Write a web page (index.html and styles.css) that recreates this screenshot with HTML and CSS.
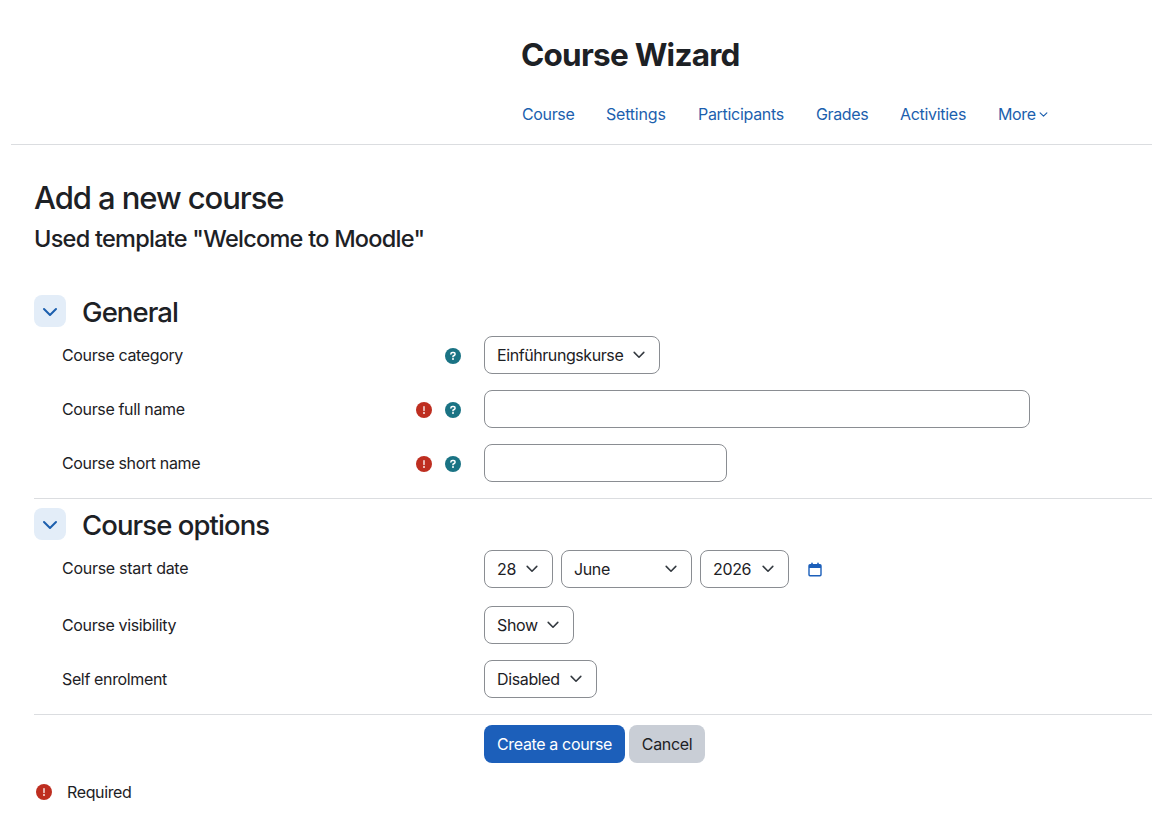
FILE: index.html
```
<!DOCTYPE html>
<html lang="en">
<head>
  <meta charset="UTF-8">
  <meta name="viewport" content="width=device-width, initial-scale=1.0">
  <title>Course Wizard</title>
  <link rel="stylesheet" href="styles.css">
</head>
<body>
  <!-- Shared icons -->
  <svg class="sprite" width="0" height="0">
    <symbol id="chevron" viewBox="0 0 16 16">
      <path d="M2 5l6 6 6-6" fill="none" stroke="currentColor" stroke-width="2" stroke-linecap="round" stroke-linejoin="round"/>
    </symbol>
    <symbol id="required" viewBox="0 0 16 16">
      <circle cx="8" cy="8" r="8" fill="#be2e20"/>
      <path d="M8 4.7v3.8" stroke="#fff" stroke-width="1.3" stroke-linecap="round"/>
      <circle cx="8" cy="11" r=".9" fill="#fff"/>
    </symbol>
    <symbol id="help" viewBox="0 0 16 16">
      <circle cx="8" cy="8" r="8" fill="#1a7384"/>
      <path d="M5.9 6.1c0-1 .7-1.5 1.6-1.5h1c.9 0 1.6.6 1.6 1.5 0 .7-.4 1.1-.9 1.4L8 8.2v.6" fill="none" stroke="#fff" stroke-width="1.5" stroke-linecap="round" stroke-linejoin="round"/>
      <circle cx="8" cy="11.1" r="1" fill="#fff"/>
    </symbol>
  </svg>

  <header class="page-header">
    <h1>Course Wizard</h1>
    <nav class="tabs">
      <a class="tab-course" href="#">Course</a>
      <a class="tab-settings" href="#">Settings</a>
      <a class="tab-participants" href="#">Participants</a>
      <a class="tab-grades" href="#">Grades</a>
      <a class="tab-activities" href="#">Activities</a>
      <a class="more" href="#">More<svg><use href="#chevron"/></svg></a>
    </nav>
  </header>

  <main>
    <h2>Add a new course</h2>
    <h4>Used template "Welcome to Moodle"</h4>

    <form>
      <section class="general">
        <div class="section-head">
          <button type="button" class="toggle"><svg><use href="#chevron"/></svg></button>
          <h3>General</h3>
        </div>
        <div class="row">
          <label for="category">Course category</label>
          <span class="icons"><svg><use href="#help"/></svg></span>
          <select id="category" class="category"><option>Einführungskurse</option></select>
        </div>
        <div class="row">
          <label for="fullname">Course full name</label>
          <span class="icons"><svg><use href="#required"/></svg><svg><use href="#help"/></svg></span>
          <input id="fullname" class="fullname" type="text">
        </div>
        <div class="row">
          <label for="shortname">Course short name</label>
          <span class="icons"><svg><use href="#required"/></svg><svg><use href="#help"/></svg></span>
          <input id="shortname" class="shortname" type="text">
        </div>
      </section>

      <section class="options">
        <div class="section-head">
          <button type="button" class="toggle"><svg><use href="#chevron"/></svg></button>
          <h3>Course options</h3>
        </div>
        <div class="row date-row">
          <label for="day">Course start date</label>
          <span class="icons"></span>
          <div class="date">
            <select id="day" class="day"><option>28</option></select>
            <select class="month"><option>June</option></select>
            <select class="year"><option>2026</option></select>
            <svg class="calendar" viewBox="0 0 14 16">
              <path fill="#1c5fba" fill-rule="evenodd" d="M3.2 1.2a.8.8 0 0 1 1.6 0V2h4.4v-.8a.8.8 0 0 1 1.6 0V2H12a1.7 1.7 0 0 1 1.7 1.7v9.1a1.7 1.7 0 0 1-1.7 1.7H2A1.7 1.7 0 0 1 .3 12.8V3.7A1.7 1.7 0 0 1 2 2h1.2zM1.7 6v6.600c0 .3.2.5.5.5h9.600c.3 0 .5-.2.5-.5V6z"/>
            </svg>
          </div>
        </div>
        <div class="row">
          <label for="visibility">Course visibility</label>
          <span class="icons"></span>
          <select id="visibility" class="visibility"><option>Show</option></select>
        </div>
        <div class="row">
          <label for="enrolment">Self enrolment</label>
          <span class="icons"></span>
          <select id="enrolment" class="enrolment"><option>Disabled</option></select>
        </div>
      </section>

      <div class="actions">
        <button type="submit" class="btn primary">Create a course</button>
        <button type="button" class="btn secondary">Cancel</button>
      </div>
    </form>

    <div class="required-note"><svg><use href="#required"/></svg><span>Required</span></div>
  </main>
</body>
</html>
```
FILE: styles.css
```
* { box-sizing: border-box; }
body {
  margin: 0;
  background: #fff;
  color: #1d2125;
  font: 16px/24px Inter, "Liberation Sans", sans-serif;
  letter-spacing: -0.36px;
  overflow: hidden;
}
h1, h2, h3, h4 { margin: 0; }
.sprite { position: absolute; }

/* Header */
.page-header {
  height: 145px;
  margin-left: 11px;
  padding: 35px 0 0 510px;
  border-bottom: 1px solid #dbdde0;
}
h1 { font-size: 31.5px; line-height: 40px; font-weight: 700; letter-spacing: -0.75px; }
.tabs { display: flex; gap: 32px; margin-top: 27px; padding-left: 1px; }
.tabs a { color: #1c5fae; text-decoration: none; white-space: nowrap; }
.tab-course { width: 52px; }
.tab-settings { width: 60px; letter-spacing: -0.2px; }
.tab-participants { width: 86px; letter-spacing: -0.3px; }
.tab-grades { width: 52px; }
.tab-activities { width: 66px; letter-spacing: -0.3px; }
.more { display: flex; align-items: center; gap: 3px; }
.more svg { width: 9px; height: 9px; }

/* Form */
main { padding: 34px 0 0 34px; }
h2 { font-size: 31px; line-height: 38px; font-weight: 500; letter-spacing: -1.08px; }
h4 { font-size: 23.5px; line-height: 28px; font-weight: 500; letter-spacing: -0.74px; margin-top: 8px; }
section { border-bottom: 1px solid #dbdde0; padding-bottom: 16px; }
.general { margin-top: 42px; }
.section-head { display: flex; align-items: center; gap: 16px; height: 32px; margin-bottom: 9px; }
.options { padding-top: 9px; }
.options .section-head { margin-bottom: 10px; }
h3 { font-size: 27.5px; line-height: 34px; font-weight: 500; letter-spacing: -0.92px; padding-top: 1px; }
.toggle {
  display: grid;
  place-items: center;
  width: 32px;
  height: 32px;
  padding: 1px 0 0;
  border: 0;
  border-radius: 8px;
  background: #e3edf8;
  color: #1c5fae;
}
.toggle svg { width: 16px; height: 16px; }
.row {
  display: grid;
  grid-template-columns: 334px 65px 1fr;
  align-items: center;
  padding-left: 28px;
  margin-bottom: 16px;
  height: 38px;
}
.row:last-child { margin-bottom: 0; }
.date-row { margin-bottom: 18px; }
.date-row label { padding-bottom: 2px; letter-spacing: -0.28px; }
.icons { display: flex; justify-content: flex-end; gap: 13px; padding-top: 2px; }
.icons svg { width: 16px; height: 16px; }
.row > select, .row > input, .date { margin-left: 23px; }

select, input {
  height: 38px;
  padding: 0 12px;
  border: 1px solid #8a8d92;
  border-radius: 8px;
  background: #fff;
  color: #1d2125;
  font: inherit;
  letter-spacing: inherit;
}
select {
  appearance: none;
  background: #fff url("data:image/svg+xml,%3Csvg xmlns='http://www.w3.org/2000/svg' viewBox='0 0 16 16'%3E%3Cpath d='M2.5 5 8 10.5 13.5 5' fill='none' stroke='%23343a40' stroke-width='1.8' stroke-linecap='round' stroke-linejoin='round'/%3E%3C/svg%3E") no-repeat right 13px center / 14px 14px;
}
.category { width: 176px; letter-spacing: -0.42px; }
.fullname { width: 546px; }
.shortname { width: 243px; }
.date { display: flex; align-items: center; gap: 8px; }
.day { width: 69px; }
.month { width: 131px; }
.year { width: 89px; }
.calendar { width: 14px; height: 16px; margin: 2px 0 0 11px; }
.visibility { width: 90px; }
.enrolment { width: 113px; }

/* Buttons */
.actions { display: flex; gap: 4px; padding: 10px 0 0 450px; }
.btn {
  height: 38px;
  padding: 0;
  border: 0;
  border-radius: 8px;
  font: inherit;
  letter-spacing: inherit;
}
.primary { width: 141px; background: #1c5fba; color: #fff; }
.secondary { width: 76px; background: #c9ced6; color: #1d2125; }
.required-note { display: flex; align-items: center; gap: 15px; margin-top: 17px; padding-left: 2px; }
.required-note svg { width: 16px; height: 16px; }
```
